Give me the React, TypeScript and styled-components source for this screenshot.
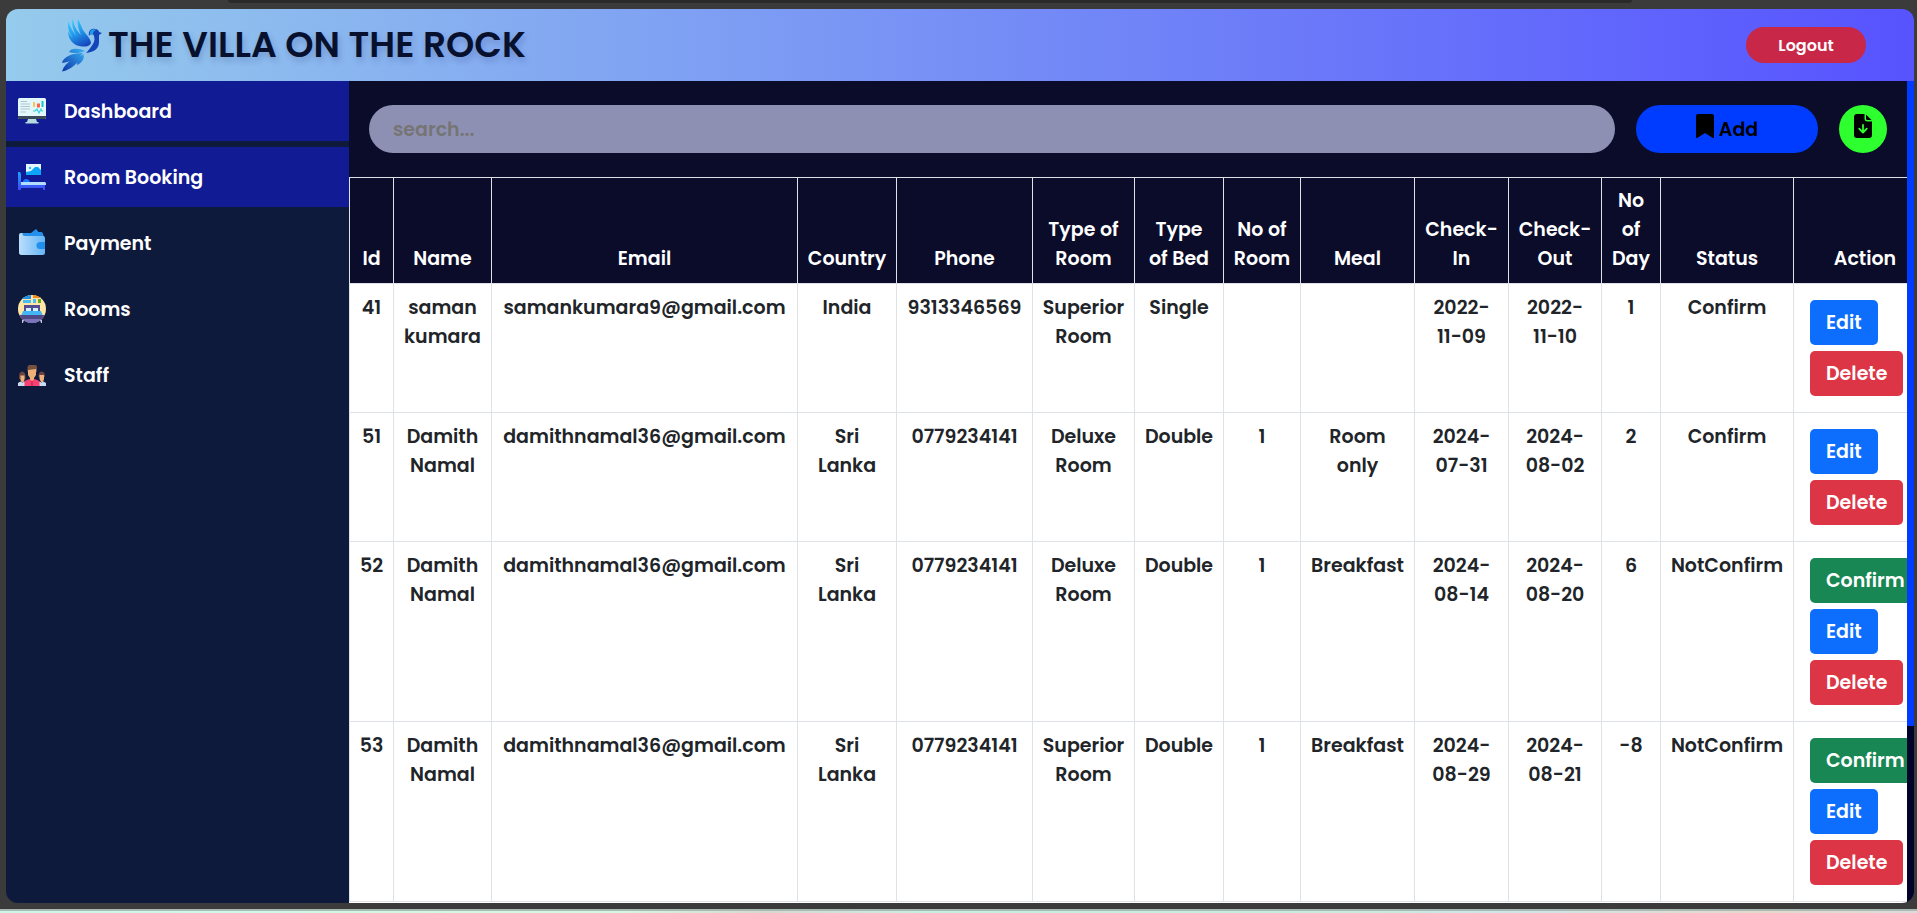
import React from "react";
import styled, { createGlobalStyle } from "styled-components";

const GlobalStyle = createGlobalStyle`
  *, *::before, *::after { box-sizing: border-box; }
  body {
    margin: 0;
    background: #3b3b3b;
    color: #212529;
    font-family: Poppins, Inter, "Liberation Sans", sans-serif;
    font-size: 19px;
    font-weight: 600;
    line-height: 29px;
  }
  button, input { font: inherit; }
`;

const Desktop = styled.div`
  display: flex;
  flex-direction: column;
  height: 100vh;
`;

const AddressEdge = styled.div`
  height: 3px;
  margin: 0 285px 6px 228px;
  background: #2a2a2a;
  border-radius: 0 0 12px 12px;
`;

const Wallpaper = styled.div`
  height: 4px;
  margin-top: 6px;
  border-top: 2px solid #a9b9b4;
  background: linear-gradient(
    90deg,
    #cdf5ea 0%, #d5f8e0 32%, #d9d8d2 40%, #c8efe0 48%,
    #c8eadf 72%, #cde6ea 78%, #e8d8cc 92%, #dcdcdc 100%
  );
`;

const Window = styled.div`
  flex: 1;
  min-height: 0;
  margin: 0 3px 0 6px;
  display: flex;
  flex-direction: column;
  border-radius: 12px;
  overflow: hidden;
`;

const Header = styled.header`
  flex: none;
  display: flex;
  align-items: center;
  justify-content: space-between;
  height: 72px;
  padding: 0 48px 0 56px;
  background: linear-gradient(90deg, #95cbec 0%, #5753ff 100%);
`;

const Brand = styled.div`
  display: flex;
  align-items: center;
  gap: 6px;
`;

const Title = styled.h1`
  margin: 0;
  font-size: 36px;
  line-height: 48px;
  font-weight: 600;
  color: #07102d;
  text-shadow: 2px 4px 6px rgba(20, 30, 90, 0.2);
`;

const LogoutButton = styled.button`
  width: 120px;
  height: 36px;
  padding: 0;
  border: 0;
  border-radius: 18px;
  background: #c82748;
  color: #fff;
  font-size: 16px;
`;

const Body = styled.div`
  flex: 1;
  min-height: 0;
  display: flex;
`;

const Sidebar = styled.nav`
  flex: none;
  width: 343px;
  display: flex;
  flex-direction: column;
  gap: 6px;
  background: #0e1a3b;
`;

const NavLink = styled.a<{ $active?: boolean }>`
  display: flex;
  align-items: center;
  gap: 18px;
  height: 60px;
  padding: 0 12px;
  background: ${(p) => (p.$active ? "#111b93" : "transparent")};
  color: #fff;
  text-decoration: none;
`;

const Main = styled.main`
  flex: 1;
  min-width: 0;
  display: flex;
  flex-direction: column;
  background: #0a0c2a;
`;

const Toolbar = styled.div`
  flex: none;
  display: flex;
  align-items: center;
  gap: 21px;
  padding: 24px 20px;
`;

const SearchInput = styled.input`
  flex: 1;
  min-width: 0;
  height: 48px;
  padding: 0 24px;
  border: 0;
  border-radius: 24px;
  background: #8e90b3;
  color: #212529;
  &::placeholder { color: #757575; opacity: 1; }
`;

const AddButton = styled.button`
  display: flex;
  align-items: center;
  justify-content: center;
  gap: 5px;
  width: 182px;
  height: 48px;
  padding: 0;
  border: 0;
  border-radius: 24px;
  background: #003cff;
  color: #000;
  svg { margin-bottom: 6px; }
`;

const ExportButton = styled.button`
  display: flex;
  align-items: center;
  justify-content: center;
  width: 48px;
  height: 48px;
  padding: 0 0 6px;
  border: 0;
  border-radius: 50%;
  background: #2eff2e;
  color: #000;
`;

const TableScroll = styled.div`
  flex: 1;
  min-height: 0;
  overflow: auto;
  scrollbar-width: none;
  background: #fff;
`;

const Table = styled.table`
  table-layout: fixed;
  width: 1587px;
  border-collapse: collapse;
  text-align: center;
`;

const Column = styled.col<{ $width: number }>`
  width: ${(p) => p.$width}px;
`;

const HeadCell = styled.th`
  padding: 8px 9px 10px;
  border: 1px solid #dee2e6;
  background: #0a0c2a;
  color: #fff;
  font-weight: 600;
  vertical-align: bottom;
`;

const Cell = styled.td`
  padding: 9px;
  border: 1px solid #dee2e6;
  vertical-align: top;
`;

const ActionCell = styled(Cell)`
  padding: 16px;
`;

const Actions = styled.div`
  display: flex;
  flex-direction: column;
  align-items: flex-start;
  gap: 6px;
`;

const tones = { confirm: "#198754", edit: "#0d6efd", remove: "#dc3545" };

const ActionButton = styled.button<{ $tone: keyof typeof tones }>`
  height: 45px;
  padding: 0 16px;
  border: 0;
  border-radius: 5px;
  background: ${(p) => tones[p.$tone]};
  color: #fff;
`;

const ScrollTrack = styled.div`
  flex: none;
  width: 7px;
  background: #02032a;
`;

const ScrollThumb = styled.div`
  height: 78.5%;
  background: #003cff;
`;

const BirdLogo = () => (
  <svg width="40" height="54" viewBox="0 0 40 54" aria-hidden="true">
    <defs>
      <linearGradient id="wing" x1="0.3" y1="0" x2="0.7" y2="1">
        <stop offset="0" stopColor="#35d0ff" />
        <stop offset="0.5" stopColor="#2196ea" />
        <stop offset="1" stopColor="#1546bd" />
      </linearGradient>
      <linearGradient id="tail" x1="1" y1="0" x2="0" y2="1">
        <stop offset="0" stopColor="#38b4f4" />
        <stop offset="1" stopColor="#0c35a8" />
      </linearGradient>
    </defs>
    <path d="M11 0C9 6 11 13 15 19C11 14 8 9 6.500 3.500C5 9 7 15 11 20C9 18 7.500 16 6 13C6 22 12 28 20 28.500C24 29 28 28 29 25C29 20 22 15 20 10C19 7 17 3 16 1C15 6 16.500 12 19 17C14 12 11 6 11 0Z" fill="url(#wing)" />
    <path d="M27 18C26 13 29 10 33 11C36 11 37 13 37 14L40 15L37 17C37 20 37 22 37 24C37 31 32 34 24 35C27 32 29 29 31 26C33 23 33 19 31 16C29 15 28 16 27 18Z" fill="#1245b8" />
    <path d="M28 17C27 12 31 10 35 12C32 12 31 14 30.500 17Z" fill="#239be8" />
    <path d="M23 33C17 29.500 8 30 7 34C12 36 18 35 23 33ZM21 35C10 35 1 39 0 45C8 44 17 40 21 35ZM22 36C14 40 3 43 0 53.500C9 52 17 44 22 36ZM22 37C17 41 15 44 15 47C20 45 22 41 22 37Z" fill="url(#tail)" />
  </svg>
);

const DashboardIcon = () => (
  <svg width="28" height="28" viewBox="0 0 28 28" aria-hidden="true">
    <path d="M10 22h8l1 3h1.500v1.500h-13V25H9z" fill="#b4dbe2" />
    <rect y="1" width="28" height="21" rx="1.500" fill="#e3f8fc" />
    <path d="M0 19h28v1.500a1.500 1.500 0 0 1-1.500 1.500h-25A1.500 1.500 0 0 1 0 20.500z" fill="#3c4a57" />
    <path d="M2.500 4.500H9M2.500 7H12M2.500 9.500H12M2.500 12H12M2.500 15H8" stroke="#b1c5cb" strokeWidth="1" />
    <path d="M15 5h2v5h-2z" fill="#ffc34d" />
    <path d="M19 6.500h3v4h-3z" fill="#ff6243" />
    <path d="M23.500 4h2v6h-2z" fill="#16c4c9" />
    <path d="M15 14h2l2-2 2 4 2-4 1 2h1" fill="none" stroke="#3bd4e0" strokeWidth="1.200" />
  </svg>
);

const BedIcon = () => (
  <svg width="28" height="28" viewBox="0 0 28 28" aria-hidden="true">
    <defs>
      <linearGradient id="bed" x1="0" y1="0" x2="0" y2="1">
        <stop offset="0" stopColor="#18a5ff" />
        <stop offset="1" stopColor="#4248f3" />
      </linearGradient>
    </defs>
    <rect x="8" y="1" width="15" height="11" fill="#e4f7ff" />
    <path d="M8 9l5-1 4-4h3l3 3v5H8z" fill="#0ca5f8" />
    <circle cx="12" cy="5" r="1.200" fill="#35b8f7" />
    <path d="M0 9h2l1 2v11h24v5h-2v-2H3v2H0z" fill="url(#bed)" />
    <path d="M5 19c0-4 6-4 7 0z" fill="#1a75ff" />
    <path d="M3 19h24l1 1v2H3z" fill="#b4dcff" />
  </svg>
);

const WalletIcon = () => (
  <svg width="28" height="28" viewBox="0 0 28 28" aria-hidden="true">
    <defs>
      <linearGradient id="wallet" x1="0" y1="0" x2="1" y2="0">
        <stop offset="0" stopColor="#bbdefb" />
        <stop offset="1" stopColor="#64b5f6" />
      </linearGradient>
    </defs>
    <path d="M3.500 4h9.500l5-4 2.500 3H23c1.500 0 2 1 2 2l1 3v3H5z" fill="#2590ea" />
    <path d="M3 4h1.500v1c0 1 1 2 2.500 2h18a2 2 0 0 1 2 2v14.500a2.500 2.500 0 0 1-2.500 2.500h-21A2.500 2.500 0 0 1 1 23.500V6a2 2 0 0 1 2-2z" fill="url(#wallet)" />
    <path d="M22 13h5v7h-5a3.500 3.500 0 0 1 0-7z" fill="#2090ed" />
  </svg>
);

const RoomIcon = () => (
  <svg width="28" height="28" viewBox="0 0 28 28" aria-hidden="true">
    <defs>
      <clipPath id="roomClip"><circle cx="14" cy="14" r="14" /></clipPath>
    </defs>
    <g clipPath="url(#roomClip)">
      <path d="M0 0h28v28H0z" fill="#ffe5a6" />
      <path d="M4 0h9v4H4z" fill="#238ee6" />
      <path d="M15 0h8v3h-8z" fill="#f58a1c" />
      <path d="M5 5h8v3H5zM15 4h3v4h-3z" fill="#46bff4" />
      <path d="M20 4h3v4h-3z" fill="#65ac22" />
      <path d="M6 10h16v9H6z" fill="#554d91" />
      <path d="M5 16h18l2 5H3z" fill="#42b5f5" />
      <path d="M8 13h5v3H8zM15 13h5v3h-5z" fill="#cff4ff" />
      <path d="M2 20h24v8H2z" fill="#504987" />
      <path d="M4 24h20v4H4z" fill="#7c75b9" />
    </g>
    <path d="M4 25h2l-1 3H4zM22 25h2v3h-1z" fill="#c5c2dc" />
  </svg>
);

const StaffIcon = () => (
  <svg width="28" height="28" viewBox="0 0 28 28" aria-hidden="true">
    <path d="M1 15c0-6 6.500-6 6.500 0v3H1zM20.500 15c0-6 6.500-6 6.500 0v1h-6.500z" fill="#6b443e" />
    <path d="M2.500 14.500h4V19l-1 2h-2l-1-2zM21.500 14h4.500v4l-1 3h-2l-1.500-3z" fill="#f0b27c" />
    <path d="M0 25v-3l2.500-1.500 2 1 2-1L9 22v3zM19 25v-3l2.500-1.500 2 1 2-1L28 22v3z" fill="#cddaf0" />
    <path d="M9.500 11V6.500C9.500 4.500 11 4 12 4h5c1.500 0 2 1 2 2.500V11z" fill="#76513f" />
    <path d="M10 9l8-1v6l-2 3v3h-4v-3l-2-3z" fill="#edb177" />
    <path d="M6.500 25v-4l1-1.500 4-1.500 2.500 2 2.500-2 4 1.500 1 1.500v4z" fill="#f7416e" />
    <path d="M13.300 20h1.400v5h-1.400z" fill="#c92659" />
  </svg>
);

const BookmarkIcon = () => (
  <svg width="18" height="24" viewBox="0 0 18 24" aria-hidden="true">
    <path d="M0 2a2 2 0 0 1 2-2h14a2 2 0 0 1 2 2v21a1 1 0 0 1-1.500.800L9 19l-7.500 4.800A1 1 0 0 1 0 23z" />
  </svg>
);

const FileDownIcon = () => (
  <svg width="18" height="24" viewBox="0 0 18 24" aria-hidden="true">
    <path d="M3 0h7.500v4.500A3 3 0 0 0 13.500 7.500H18V21a3 3 0 0 1-3 3H3a3 3 0 0 1-3-3V3a3 3 0 0 1 3-3z" />
    <path d="M12 0.500L17.500 6h-4A1.500 1.500 0 0 1 12 4.500z" />
    <path d="M9 11v7M5.200 14.700L9 18.500l3.800-3.800" fill="none" stroke="#2eff2e" strokeWidth="1.800" strokeLinecap="round" strokeLinejoin="round" />
  </svg>
);

const navigation = [
  { label: "Dashboard", Icon: DashboardIcon, active: true },
  { label: "Room Booking", Icon: BedIcon, active: true },
  { label: "Payment", Icon: WalletIcon },
  { label: "Rooms", Icon: RoomIcon },
  { label: "Staff", Icon: StaffIcon },
];

const columns: [string, number][] = [
  ["Id", 44], ["Name", 98], ["Email", 306], ["Country", 99], ["Phone", 136],
  ["Type of Room", 102], ["Type of Bed", 89], ["No of Room", 77], ["Meal", 114],
  ["Check-In", 94], ["Check-Out", 93], ["No of Day", 59], ["Status", 133], ["Action", 143],
];

const bookings = [
  ["41", "saman kumara", "samankumara9@gmail.com", "India", "9313346569", "Superior Room", "Single", "", "", "2022-11-09", "2022-11-10", "1", "Confirm"],
  ["51", "Damith Namal", "damithnamal36@gmail.com", "Sri Lanka", "0779234141", "Deluxe Room", "Double", "1", "Room only", "2024-07-31", "2024-08-02", "2", "Confirm"],
  ["52", "Damith Namal", "damithnamal36@gmail.com", "Sri Lanka", "0779234141", "Deluxe Room", "Double", "1", "Breakfast", "2024-08-14", "2024-08-20", "6", "NotConfirm"],
  ["53", "Damith Namal", "damithnamal36@gmail.com", "Sri Lanka", "0779234141", "Superior Room", "Double", "1", "Breakfast", "2024-08-29", "2024-08-21", "-8", "NotConfirm"],
];

const App: React.FC = () => (
  <>
    <GlobalStyle />
    <Desktop>
      <AddressEdge />
      <Window>
        <Header>
          <Brand>
            <BirdLogo />
            <Title>THE VILLA ON THE ROCK</Title>
          </Brand>
          <LogoutButton type="button">Logout</LogoutButton>
        </Header>
        <Body>
          <Sidebar aria-label="Main">
            {navigation.map(({ label, Icon, active }) => (
              <NavLink key={label} href="#" $active={active}>
                <Icon />
                {label}
              </NavLink>
            ))}
          </Sidebar>
          <Main>
            <Toolbar>
              <SearchInput type="text" placeholder="search..." aria-label="Search bookings" />
              <AddButton type="button">
                <BookmarkIcon />
                Add
              </AddButton>
              <ExportButton type="button" aria-label="Export">
                <FileDownIcon />
              </ExportButton>
            </Toolbar>
            <TableScroll>
              <Table>
                <colgroup>
                  {columns.map(([name, width]) => <Column key={name} $width={width} />)}
                </colgroup>
                <thead>
                  <tr>
                    {columns.map(([name]) => <HeadCell key={name} scope="col">{name}</HeadCell>)}
                  </tr>
                </thead>
                <tbody>
                  {bookings.map((row) => (
                    <tr key={row[0]}>
                      {row.map((value, i) => <Cell key={i}>{value}</Cell>)}
                      <ActionCell>
                        <Actions>
                          {row[12] === "NotConfirm" && (
                            <ActionButton type="button" $tone="confirm">Confirm</ActionButton>
                          )}
                          <ActionButton type="button" $tone="edit">Edit</ActionButton>
                          <ActionButton type="button" $tone="remove">Delete</ActionButton>
                        </Actions>
                      </ActionCell>
                    </tr>
                  ))}
                </tbody>
              </Table>
            </TableScroll>
          </Main>
          <ScrollTrack>
            <ScrollThumb />
          </ScrollTrack>
        </Body>
      </Window>
      <Wallpaper />
    </Desktop>
  </>
);

export default App;
